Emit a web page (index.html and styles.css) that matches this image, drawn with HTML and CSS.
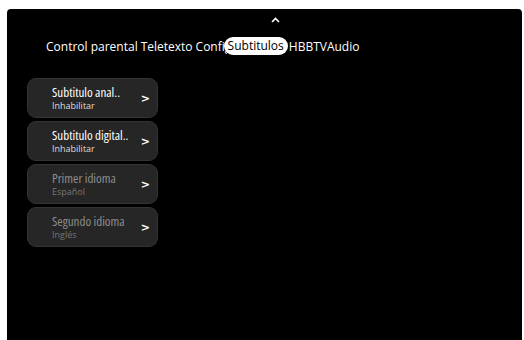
FILE: index.html
```html
<!DOCTYPE html>
<html lang="es">
<head>
    <meta charset="UTF-8">
    <title>Subtitulos</title>
    <link rel="stylesheet" href="styles.css">
</head>
<body>
    <div class="screen">
        <div class="up-arrow">
            <svg width="9" height="6" viewBox="0 0 9 6"><path d="M1 5 L4.5 1.5 L8 5" fill="none" stroke="#fff" stroke-width="1.6"/></svg>
        </div>

        <div class="tabs">
            <span class="tab">Control parental</span>
            <span class="tab">Teletexto</span>
            <span class="tab tab-cut">Configuración</span>
            <span class="tab tab-active">Subtitulos</span>
            <span class="tab tab-tight">HBBTV</span>
            <span class="tab tab-tight">Audio</span>
        </div>

        <div class="menu">
            <div class="item">
                <div class="item-text">
                    <div class="item-title">Subtitulo anal..</div>
                    <div class="item-sub">Inhabilitar</div>
                </div>
                <span class="chevron">&gt;</span>
            </div>
            <div class="item">
                <div class="item-text">
                    <div class="item-title">Subtitulo digital..</div>
                    <div class="item-sub">Inhabilitar</div>
                </div>
                <span class="chevron">&gt;</span>
            </div>
            <div class="item item-off">
                <div class="item-text">
                    <div class="item-title">Primer idioma</div>
                    <div class="item-sub">Español</div>
                </div>
                <span class="chevron">&gt;</span>
            </div>
            <div class="item item-off">
                <div class="item-text">
                    <div class="item-title">Segundo idioma</div>
                    <div class="item-sub">Inglés</div>
                </div>
                <span class="chevron">&gt;</span>
            </div>
        </div>
    </div>
</body>
</html>
```

FILE: styles.css
```css
html, body {
    height: 100%;
}
body {
    margin: 0;
    background-color: #fff;
    font-family: "Open Sans", sans-serif;
    overflow: hidden;
}
.screen {
    box-sizing: border-box;
    margin: 9px 2px 0 7px;
    height: calc(100% - 9px);
    background-color: #000;
    border-radius: 4px 4px 0 0;
    padding: 8px 0 0 20px;
    color: #fff;
}
.up-arrow {
    height: 8px;
    padding-left: 244px;
}
.up-arrow svg {
    display: block;
}
.tabs {
    display: flex;
    align-items: center;
    margin-top: 12px;
    padding-left: 19px;
    font-size: 12px;
    height: 18px;
    white-space: nowrap;
}
.tab {
    margin-right: 3px;
}
.tab-cut {
    width: 31px;
    overflow: hidden;
    margin-right: 0;
}
.tab-active {
    background-color: #fff;
    color: #000;
    border-radius: 9px;
    padding: 0 4px;
    height: 18px;
    line-height: 18px;
    margin: 0 1px 0 -3px;
}
.tab-tight {
    margin-right: 0;
}
.menu {
    display: flex;
    flex-direction: column;
    gap: 3px;
    margin-top: 23px;
    width: 131px;
}
.item {
    display: flex;
    align-items: center;
    height: 40px;
    box-sizing: border-box;
    padding: 0 7px 0 24px;
    background-color: #262626;
    border: 1px solid #333;
    border-radius: 9px;
}
.item-text {
    flex: 1;
}
.item-title {
    font-size: 13px;
    line-height: 15px;
    font-stretch: condensed;
    color: #fff;
}
.item-sub {
    font-size: 9px;
    line-height: 11px;
    color: #ddd;
}
.item-off .item-title {
    color: #8c8c8c;
}
.item-off .item-sub {
    color: #777;
}
.chevron {
    font-family: "DejaVu Sans", sans-serif;
    font-weight: bold;
    font-size: 11px;
    color: #fff;
}
```
